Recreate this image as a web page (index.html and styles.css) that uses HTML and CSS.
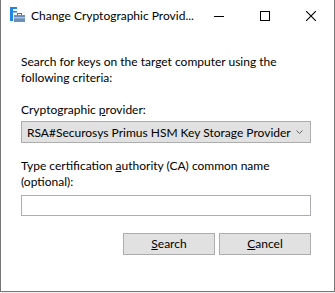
FILE: index.html
```html
<!DOCTYPE html>
<html>
<head>
<meta charset="utf-8">
<link rel="stylesheet" href="styles.css">
</head>
<body>
<div class="window">
  <div class="titlebar">
    <svg class="app-icon" width="16" height="16" viewBox="0 0 16 16">
      <rect x="0" y="0" width="7" height="2" fill="#1e88e5"/>
      <rect x="0" y="4" width="7" height="1.5" fill="#1e88e5"/>
      <rect x="0" y="0" width="3" height="14" fill="#1e88e5"/>
      <rect x="7.5" y="6.5" width="4" height="2" fill="none" stroke="#4a6f98" stroke-width="1"/>
      <rect x="4" y="8" width="11" height="7" fill="#6b8fb8"/>
      <rect x="4" y="10" width="11" height="1.5" fill="#a9c2dd"/>
    </svg>
    <span class="title">Change Cryptographic Provid...</span>
    <div class="caption-buttons">
      <span class="cap cap-min"><svg width="10" height="10" viewBox="0 0 10 10"><path d="M0 5.5h10" stroke="#000" stroke-width="1"/></svg></span>
      <span class="cap cap-max"><svg width="10" height="10" viewBox="0 0 10 10"><rect x="0.5" y="0.5" width="9" height="9" fill="none" stroke="#000" stroke-width="1"/></svg></span>
      <span class="cap cap-close"><svg width="10" height="10" viewBox="0 0 10 10"><path d="M0 0L10 10M10 0L0 10" stroke="#000" stroke-width="1.1"/></svg></span>
    </div>
  </div>
  <div class="content">
    <p class="intro">Search for keys on the target computer using the following criteria:</p>
    <div class="label">Cryptographic <u>p</u>rovider:</div>
    <div class="combo">
      <span class="combo-text">RSA#Securosys Primus HSM Key Storage Provider</span>
      <svg class="chevron" width="7" height="4" viewBox="0 0 7 4"><path d="M0.5 0.5L3.5 3.5L6.5 0.5" fill="none" stroke="#606060" stroke-width="1"/></svg>
    </div>
    <div class="label label-ca">Type certification <u>a</u>uthority (CA) common name<br>(optional):</div>
    <div class="textbox"></div>
    <div class="buttons">
      <button class="btn"><u>S</u>earch</button>
      <button class="btn"><u>C</u>ancel</button>
    </div>
  </div>
</div>
</body>
</html>
```
FILE: styles.css
```css
html, body {
  margin: 0;
  padding: 0;
  background: #f0f0f0;
}
body {
  width: 335px;
  height: 293px;
  overflow: hidden;
  font-family: "Lato", "Noto Sans", sans-serif;
  font-size: 12px;
  color: #000;
}
.window {
  box-sizing: border-box;
  width: 335px;
  height: 292px;
  background: #fff;
  border: 1px solid #777;
  border-top: none;
  display: flex;
  flex-direction: column;
}
.titlebar {
  height: 31px;
  display: flex;
  align-items: center;
  padding-left: 9px;
}
.app-icon {
  flex: none;
  margin-top: -1px;
}
.title {
  margin-left: 5px;
  font-size: 12px;
  white-space: nowrap;
  margin-top: -1px;
}
.caption-buttons {
  margin-left: auto;
  display: flex;
  height: 31px;
}
.cap {
  width: 46px;
  height: 31px;
  display: flex;
  align-items: center;
  justify-content: center;
}
.content {
  padding: 0 23px 0 20px;
  display: flex;
  flex-direction: column;
}
.intro {
  margin: 23px 0 0;
  line-height: 16px;
}
.label {
  margin-top: 16px;
  line-height: 16px;
  white-space: nowrap;
}
.combo {
  box-sizing: border-box;
  margin-top: 3px;
  height: 22px;
  background: #e1e1e1;
  border: 1px solid #adadad;
  display: flex;
  align-items: center;
  padding-left: 5px;
  padding-right: 7px;
}
.combo-text {
  flex: 1;
  white-space: nowrap;
  overflow: hidden;
}
.chevron {
  flex: none;
}
.label-ca {
  margin-top: 15px;
}
.textbox {
  box-sizing: border-box;
  margin-top: 5px;
  height: 21px;
  border: 1px solid #abadb3;
  background: #fff;
}
.buttons {
  display: flex;
  justify-content: flex-end;
  gap: 4px;
  margin-top: 17px;
}
.btn {
  box-sizing: border-box;
  width: 92px;
  height: 22px;
  background: #e1e1e1;
  border: 1px solid #adadad;
  font-family: inherit;
  font-size: 12px;
  color: #000;
  padding: 0;
  line-height: 18px;
}
```
